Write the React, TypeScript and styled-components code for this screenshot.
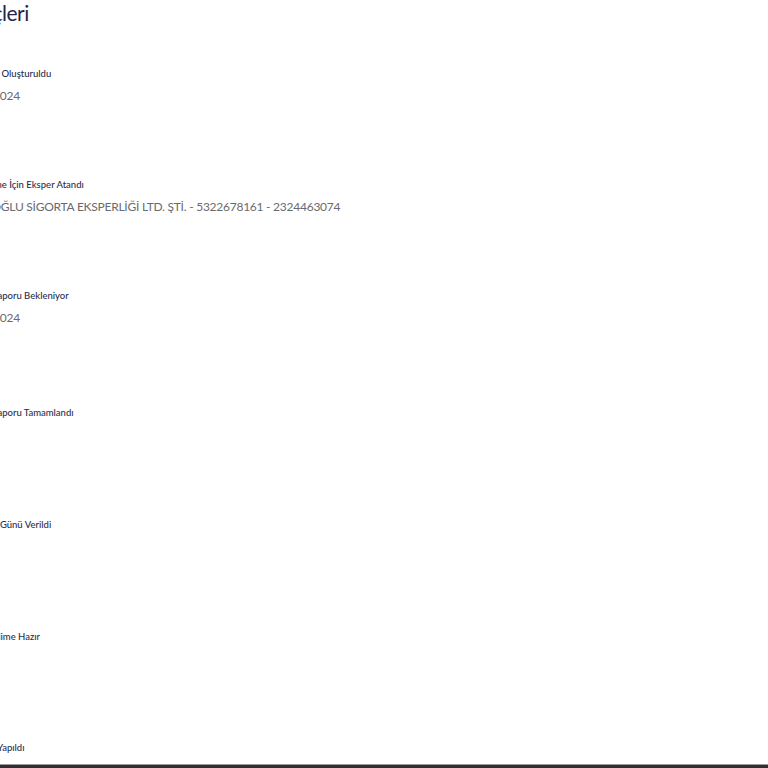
import React from "react";
import styled, { createGlobalStyle } from "styled-components";

const Global = createGlobalStyle`
  html, body { margin: 0; padding: 0; background: #ffffff; overflow: hidden; }
  body { font-family: Lato, "Noto Sans", "DejaVu Sans", sans-serif; }
`;

const Page = styled.div`
  width: 900px;
  margin-left: -99px;
`;

const Title = styled.h2`
  margin: 0 0 0 -3px;
  font-size: 21px;
  line-height: 26px;
  font-weight: 400;
  letter-spacing: -0.5px;
  color: #1f2547;
`;

const Timeline = styled.ol`
  list-style: none;
  margin: 41px 0 0;
  padding: 0 0 0 60px;
  display: flex;
  flex-direction: column;
`;

const Step = styled.li<{ $h: number }>`
  height: ${(p) => p.$h}px;
  display: flex;
  flex-direction: column;
  gap: 7px;
`;

const Label = styled.div`
  font-size: 9.5px;
  line-height: 14px;
  font-weight: 500;
  color: #2a2e4d;
`;

const Value = styled.div`
  font-size: 12px;
  line-height: 16px;
  font-weight: 400;
  letter-spacing: -0.25px;
  color: #6a6a70;
`;

const BottomBar = styled.div`
  position: fixed;
  left: 0;
  right: 0;
  bottom: 0;
  height: 3px;
  background: #2f2f2f;
  border-top: 1px solid #9a9a9a;
`;

const steps: { label: string; value?: string; h: number }[] = [
  { label: "Dosyanız Oluşturuldu", value: "12.03.2024", h: 111 },
  {
    label: "Değerleme İçin Eksper Atandı",
    value: "KARAOĞLU SİGORTA EKSPERLİĞİ LTD. ŞTİ. - 5322678161 - 2324463074",
    h: 111,
  },
  { label: "Eksper Raporu Bekleniyor", value: "14.03.2024", h: 117 },
  { label: "Eksper Raporu Tamamlandı", h: 112 },
  { label: "Randevu Günü Verildi", h: 112 },
  { label: "Aracı Teslime Hazır", h: 111 },
  { label: "Teslimat Yapıldı", h: 111 },
];

export default function App() {
  return (
    <>
      <Global />
      <Page>
        <Title>Hasar Süreçleri</Title>
        <Timeline>
          {steps.map((s) => (
            <Step key={s.label} $h={s.h}>
              <Label>{s.label}</Label>
              {s.value && <Value>{s.value}</Value>}
            </Step>
          ))}
        </Timeline>
      </Page>
      <BottomBar />
    </>
  );
}
